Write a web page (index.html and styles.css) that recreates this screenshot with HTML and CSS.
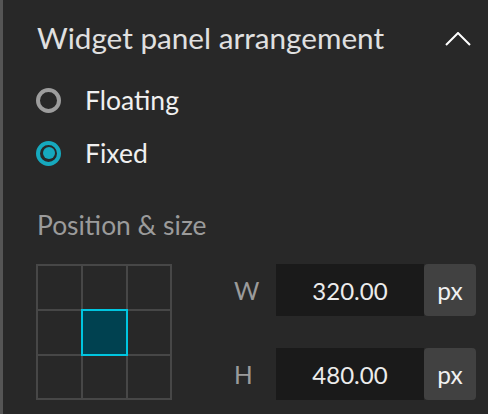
FILE: index.html
```html
<!DOCTYPE html>
<html>
<head>
<meta charset="utf-8">
<link rel="stylesheet" href="styles.css">
</head>
<body>
<div class="panel">
  <div class="header">
    <span class="title">Widget panel arrangement</span>
    <svg class="chevron" width="26" height="14" viewBox="0 0 26 14"><polyline points="1,13 13,1 25,13" fill="none" stroke="#ffffff" stroke-width="2"/></svg>
  </div>
  <div class="options">
    <label class="option"><span class="radio"></span><span class="opt-text">Floating</span></label>
    <label class="option"><span class="radio checked"></span><span class="opt-text">Fixed</span></label>
  </div>
  <div class="section-label">Position &amp; size</div>
  <div class="pos-size">
    <div class="anchor-grid">
      <div class="cell"></div><div class="cell"></div><div class="cell"></div>
      <div class="cell"></div><div class="cell selected"></div><div class="cell"></div>
      <div class="cell"></div><div class="cell"></div><div class="cell"></div>
    </div>
    <div class="dims">
      <div class="dim-row"><span class="dim-label">W</span><span class="dim-input">320.00</span><span class="dim-unit">px</span></div>
      <div class="dim-row"><span class="dim-label">H</span><span class="dim-input">480.00</span><span class="dim-unit">px</span></div>
    </div>
  </div>
</div>
</body>
</html>
```
FILE: styles.css
```css
html, body {
  margin: 0;
  padding: 0;
  background: #282828;
}
.panel {
  width: 488px;
  height: 414px;
  box-sizing: border-box;
  background: #282828;
  border-left: 3px solid #555555;
  padding: 0 12px 0 33px;
  font-family: Lato, "Open Sans", sans-serif;
  overflow: hidden;
}
.header {
  height: 74px;
  display: flex;
  align-items: center;
  justify-content: space-between;
  padding-right: 5px;
}
.title {
  font-size: 29.7px;
  color: #e0e0e0;
  padding-left: 1px;
}
.chevron {
  display: block;
  margin-top: 4px;
}
.options {
  display: flex;
  flex-direction: column;
  gap: 9px;
  margin-top: 4px;
}
.option {
  height: 44px;
  display: flex;
  align-items: center;
}
.radio {
  flex: none;
  width: 25px;
  height: 25px;
  box-sizing: border-box;
  border: 4px solid #9d9d9d;
  border-radius: 50%;
  margin-right: 24px;
  position: relative;
}
.radio.checked {
  border-color: #16a9be;
}
.radio.checked::after {
  content: "";
  position: absolute;
  left: 2.5px;
  top: 2.5px;
  width: 12px;
  height: 12px;
  border-radius: 50%;
  background: #16a9be;
}
.opt-text {
  font-size: 26.5px;
  color: #f0f0f0;
}
.section-label {
  margin-top: 34px;
  font-size: 26.4px;
  color: #9b9b9b;
  padding-left: 1px;
  line-height: 32px;
}
.pos-size {
  margin-top: 23px;
  display: flex;
  align-items: flex-start;
}
.anchor-grid {
  display: grid;
  grid-template-columns: 43px 43px 42px;
  grid-template-rows: 43px 43px 42px;
  gap: 2px;
  padding: 2px;
  background: #474747;
}
.cell {
  background: #282828;
}
.cell.selected {
  background: #004150;
  box-shadow: 0 0 0 2px #00c6e0;
}
.dims {
  margin-left: 62px;
  display: flex;
  flex-direction: column;
  gap: 32px;
}
.dim-row {
  display: flex;
  height: 52px;
  align-items: stretch;
}
.dim-label {
  width: 42px;
  font-size: 24.5px;
  color: #9b9b9b;
  display: flex;
  align-items: center;
}
.dim-input {
  width: 148px;
  background: #1a1a1a;
  color: #ececec;
  font-size: 24px;
  display: flex;
  align-items: center;
  justify-content: center;
}
.dim-unit {
  width: 52px;
  background: #414141;
  border-radius: 4px;
  color: #f0f0f0;
  font-size: 24.5px;
  display: flex;
  align-items: center;
  justify-content: center;
}
```
